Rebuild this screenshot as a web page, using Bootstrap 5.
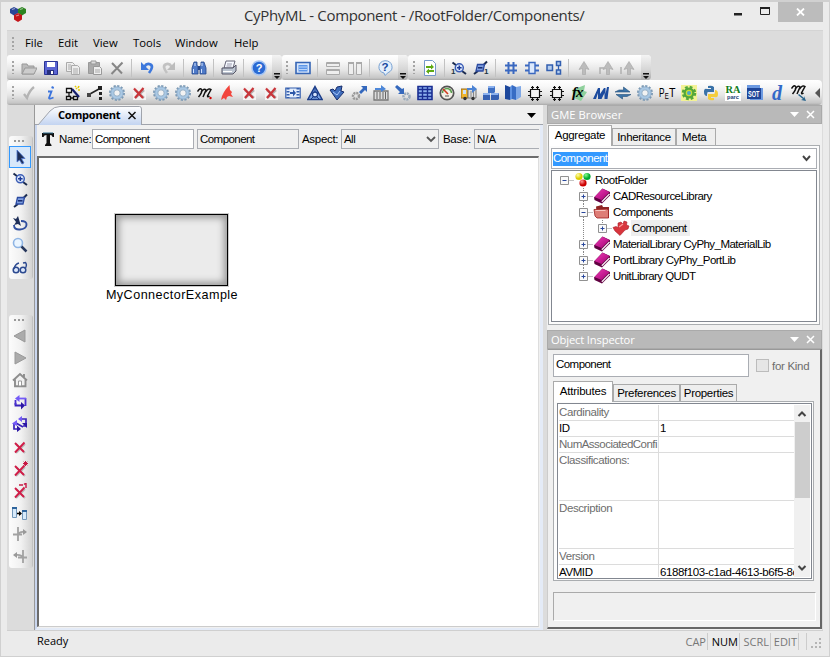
<!DOCTYPE html>
<html lang="en">
<head>
<meta charset="utf-8">
<title>CyPhyML - Component</title>
<link href="https://cdn.jsdelivr.net/npm/bootstrap@5.3.0/dist/css/bootstrap.min.css" rel="stylesheet">
<style>
*{box-sizing:border-box}
body{width:830px;height:657px;overflow:hidden;background:#ebebeb;color:#000;font:11.5px/16px "Liberation Sans",Arial,sans-serif;letter-spacing:-.55px;border:1px solid #d0d0d0;border-top-width:2px}
svg{display:block;flex:none;overflow:hidden;letter-spacing:0}
.ui{font-family:"Open Sans","Noto Sans",sans-serif;letter-spacing:0}
.titlebar{height:28px;padding-left:8px}
.titletext{font-size:15px;color:#333;width:341px;margin-left:217px;letter-spacing:-.33px;white-space:nowrap}
.closebtn{width:45px;height:20px;background:#bcbcbc;margin-right:6px}
.client{margin-left:6px;width:816px;height:621px;background:#dcdcdc;border-top:1px solid #d4d4d4}
.menubar{height:24px;font-size:11.3px;padding-left:5px}
.menubar span{white-space:nowrap}
.grip{width:2px;height:13px;flex:none;background:repeating-linear-gradient(#a4a4a4 0 2px,transparent 2px 4px)}
.band{height:25px;border-radius:3px 4px 4px 3px;background:linear-gradient(#fff 0,#f8f8f8 25%,#e6e6e6 60%,#c6c6c6 92%,#a8a8a8);padding-left:5px}
.band .grip{margin-right:4px}
.band svg{width:16px;height:16px;margin:0 3px}
.sep{width:1px;height:18px;background:#c2c2c2;margin:0 4px 0 3px;flex:none}
.ovf{width:10px;align-self:stretch;background:linear-gradient(#f4f4f4,#d5d5d5 60%,#aaa);border-radius:0 4px 4px 0;margin-left:auto;display:flex;align-items:flex-end}
.ovf svg{width:9px;height:9px;margin:0 1px 0 0}
.main{height:525px}
.dock{width:27px;padding:31px 0 0 2px}
.palette{width:24px;background:linear-gradient(90deg,#fcfcfc,#f1f1f1 50%,#d4d4d4 94%,#b8b8b8);border-radius:3px}
.dotrow{height:10px;padding-top:4px}
.dots{width:10px;height:2px;margin-left:5px;background:repeating-linear-gradient(90deg,#999 0 2px,transparent 2px 4px)}
.tool{height:22px;width:22px;display:flex;align-items:center;justify-content:center}
.tool.on{border:1px solid #3399ff;background:#d8e8fa}
.tool svg{width:16px;height:16px}
.doc{width:509px;border-left:1px solid #999;background:#f0f0f0}
.doctabs{height:20px;border-bottom:1px solid #a0a4ac;padding-top:1px}
.doctab{height:19px;width:104px;margin-left:3px}
.doctab svg{grid-area:1/1}
.doctab div{grid-area:1/1;padding-left:20px;font-weight:700;font-size:11.1px;line-height:18px;letter-spacing:-.25px}
.docbody{height:505px;border-left:2px solid #c9d6ef;border-right:3px solid #e4ebf7;padding-right:1px;border-bottom:2px solid #e4ebf7}
.objbar{height:31px;padding:4px 0 0 4px}
.field{border:1px solid #aaadb3;height:20px;background:#fff;padding:0 2px;line-height:18px;white-space:nowrap;overflow:hidden}
.flat{background:#f0f0f0}
.canvas{height:471px;background:#fff;border:solid #6c6c6c;border-width:2px 1px 1px 2px;border-right-color:#ddd;border-bottom-color:#ccc;padding:56px 0 0 65px}
.model{width:136px;font-size:12.6px;letter-spacing:.46px;text-align:center;white-space:nowrap}
.modelbox{width:113px;height:72px;margin:0 auto 1px 11px;border:1px solid #000;background:#ebebeb;box-shadow:inset 0 0 7px 3px #999,0 0 0 1px #ccc}
.right{width:275px;margin-left:4px;background:#f0f0f0}
.caption{height:19px;background:#b9b9b9;border:1px solid #aaa;color:#fff;font-size:11.2px;padding:0 4px 0 3px;letter-spacing:-.15px}
.tabx{border:1px solid #aaa;border-bottom:0;height:17px;background:#eee;text-align:center;line-height:17px;white-space:nowrap;letter-spacing:-.3px}
.tabx.cur{background:#fff;height:21px;line-height:18px;margin-bottom:-1px;z-index:1}
.page{border:1px solid #aaadb0;background:#fcfcfc;padding:2px}
.tree{border:1px solid #828790;background:#fff;height:152px;padding:1px 0 0 7px;margin-top:1px}
.trow{height:16px}
.trow svg{height:16px}
.trow span{white-space:nowrap}
.lv1{padding-left:19px}
.lv2{padding-left:38px}
.grid{border:1px solid #828790;background:#fff;height:176px;padding:1px}
.arow{border-bottom:1px solid #dcdcdc;height:16px;line-height:15px;overflow:hidden;color:#6d6d6d;letter-spacing:-.4px}
.arow>div{white-space:nowrap;overflow:hidden}
.arow>div:first-child{width:100px;border-right:1px solid #dcdcdc;flex:none}
.arow>div:last-child{padding-left:1px}
.tall{height:48px}
.set{color:#000}
.insp{height:280px;border:solid;border-width:1px 2px 2px 1px;border-color:#999 #666 #666 #ccc;padding:4px 6px 0 5px}
.status{height:21px;font-size:11px;border-top:1px solid #cfcfcf;background:#ebebeb;padding-left:30px;line-height:20px}
.status b{font-weight:400;color:#777;border-right:1px solid #ccc;height:17px;line-height:17px;text-align:right;padding-right:1px}
</style>
<script src="https://cdn.jsdelivr.net/npm/bootstrap@5.3.0/dist/js/bootstrap.bundle.min.js"></script>
</head>
<body>
<svg width="0" height="0" class="position-absolute">
<defs>
<linearGradient id="tabg" x2="0" y2="1"><stop stop-color="#fff"/><stop offset="1" stop-color="#c3d4f1"/></linearGradient>
<linearGradient id="blu" x2="1" y2="1"><stop stop-color="#8db4f4"/><stop offset="1" stop-color="#2650a8"/></linearGradient>
<radialGradient id="ry" cx=".35" cy=".3"><stop stop-color="#ffa"/><stop offset="1" stop-color="#dc0"/></radialGradient>
<radialGradient id="rg" cx=".35" cy=".3"><stop stop-color="#8f8"/><stop offset="1" stop-color="#0a3"/></radialGradient>
<radialGradient id="rr" cx=".35" cy=".3"><stop stop-color="#f99"/><stop offset="1" stop-color="#c00"/></radialGradient>
<linearGradient id="mag" x2="1" y2="1"><stop stop-color="#f03cb8"/><stop offset="1" stop-color="#a00070"/></linearGradient>
</defs>
<symbol id="gear" viewBox="0 0 16 16"><circle cx="8" cy="8" r="7" fill="none" stroke="#7d9ab4" stroke-width="2" stroke-dasharray="2.200 1.465"/><circle cx="8" cy="8" r="4.700" fill="none" stroke="#a9c8e4" stroke-width="3"/><circle cx="8" cy="8" r="6.200" fill="none" stroke="#86a7c6" stroke-width=".8"/><circle cx="8" cy="8" r="3.200" fill="#f2f2f2" stroke="#7f9fbc" stroke-width=".8"/></symbol>
<symbol id="redx" viewBox="0 0 16 16"><path d="M2 2h13v13H2z" fill="#f5f2f2"/><path d="M4 5l9 8M13 5l-9 8" stroke="#b5b0b0" stroke-width="2.400"/><path d="M3 3.500l9 9.500M12.500 3L4 13" stroke="#c9353a" stroke-width="2.200"/></symbol>
<symbol id="chip" viewBox="0 0 16 16"><path d="M3.500 4.500h9v8h-9zM5.500 1v3.500M10.500 1v3.500M5.500 12.500V16M10.500 12.500V16M1 6.500h2.500M1 10.500h2.500M12.500 6.500H15M12.500 10.500H15M4 2.500h3M9 2.500h3M4 14.500h3M9 14.500h3" fill="#f4f4f4" stroke="#111" stroke-width="1.200"/></symbol>
<symbol id="ovf" viewBox="0 0 9 9"><path d="M2 2h6v1.500H2zM2 5h6L5 8z" fill="#111"/></symbol>
<symbol id="book" viewBox="0 0 18 16"><path d="M1 9.500L9.500.5 17 4v3.500L9 15.500 1.500 12z" fill="#600040"/><path d="M1.500 9L9.500.8 16.500 4 8.500 12z" fill="url(#mag)"/><path d="M8.800 13.800L16.500 6" stroke="#f6e6f0" stroke-width="1.400"/></symbol>
<symbol id="boxp" viewBox="0 0 18 16"><path d="M9.500 8.500H18" stroke="#888" stroke-dasharray="1 1"/><path d="M1.500 4.500h8v8h-8z" fill="#fafafa" stroke="#919191"/><path d="M3.500 8.500h4" stroke="#2a489c"/></symbol>
<symbol id="up" viewBox="0 0 18 16"><path d="M5.500 0v4" stroke="#888" stroke-dasharray="1 1"/><use href="#boxp"/></symbol>
<symbol id="minus" viewBox="0 0 18 16"><use href="#up"/><path d="M5.500 13v3" stroke="#888" stroke-dasharray="1 1"/></symbol>
<symbol id="plusend" viewBox="0 0 18 16"><use href="#up"/><path d="M5.500 6.500v4" stroke="#2a489c"/></symbol>
<symbol id="plus" viewBox="0 0 18 16"><use href="#minus"/><path d="M5.500 6.500v4" stroke="#2a489c"/></symbol>
<symbol id="plusthru" viewBox="0 0 37 16"><path d="M5.500 0v16" stroke="#888" stroke-dasharray="1 1"/><use href="#plusend" x="19" width="18" height="16"/></symbol>
<symbol id="zin" viewBox="0 0 16 16"><path d="M1.500 2.500l4 3M11 11l4 3" stroke="#1c2c50" stroke-width="2"/><circle cx="8.300" cy="7.800" r="4" fill="#dce8fc" stroke="#3a5cb4" stroke-width="1.500"/><path d="M6 7.800h4.600M8.300 5.500v4.600" stroke="#1d3a98" stroke-width="1.500"/></symbol>
<symbol id="zout" viewBox="0 0 16 16"><path d="M11 5.500l4-4M6 11l-4 3" stroke="#1c2c50" stroke-width="2"/><path d="M5.500 4.500h7L11 11H4z" fill="#7f9fe0" stroke="#2b4aa0" stroke-width="1.300"/><path d="M6 7.800h4.500" stroke="#14286c" stroke-width="1.500"/></symbol>
<symbol id="upa" viewBox="0 0 16 16"><path d="M8 1.500l5 8-3.500-1v6h-3v-6L3 9.500z" fill="#bcbcbc" stroke="#a4a4a4" stroke-width=".6"/></symbol>
<symbol id="x1" viewBox="0 0 16 16"><path d="M4 5l9 9M13 5l-9 9" stroke="#bbb" stroke-width="2"/><path d="M3 4l9 9M12.500 3.500L3 13.500" stroke="#d11d48" stroke-width="1.900"/></symbol>
<symbol id="m3" viewBox="0 0 16 16"><path d="M.5 6.500Q3 2.500 4.500 4.500T1.500 12M4 7.500q3-5 5-2.500L6 12M8.500 7q3-4.500 5.500-2.500L10.500 11q0 1.500 2 0" fill="none" stroke="#111" stroke-width="1.500"/></symbol>
</svg>

<div class="titlebar d-flex ui">
 <svg width="18" height="18" viewBox="0 0 18 18" style="margin-top:4px"><path d="M5 1l4 2v4L5 9.500 1 7V3z" fill="#2a4596"/><path d="M13 1l4 2v4l-4 2.500L9 7V3z" fill="#2c8420"/><path d="M9 7l4 2v4.500L9 16l-4-2.500V9z" fill="#c41419"/><path d="M3 3.500l3-1M11 3.500l3-1M7 10l3-1" stroke="#fff" stroke-opacity=".5" stroke-width="1.300"/></svg>
 <div class="titletext lh-base" style="padding-top:2px">CyPhyML - Component - /RootFolder/Components/</div>
 <svg class="ms-auto" width="68" height="20" viewBox="0 0 68 20"><path d="M24 11h8v2.500h-8z" fill="#222"/><path d="M50.500 5.500h9v7h-9z" fill="none" stroke="#222"/><path d="M50 5h10v2H50z" fill="#222"/></svg>
 <div class="closebtn d-flex align-items-center justify-content-center"><svg width="9" height="8" viewBox="0 0 9 8"><path d="M1 .5l7 7M8 .5l-7 7" stroke="#fff" stroke-width="1.800"/></svg></div>
</div>

<div class="client">
 <div class="menubar ui d-flex align-items-center">
  <i class="grip"></i>
  <span style="margin-left:11px;width:33px">File</span><span style="width:35px">Edit</span><span style="width:40px">View</span><span style="width:42px">Tools</span><span style="width:59px">Window</span><span>Help</span>
 </div>

 <div class="d-flex">
  <div class="band d-flex align-items-center" style="width:275px">
   <i class="grip"></i>
   <svg viewBox="0 0 16 16"><path d="M1 4h5l1 2h6v8H1z" fill="#bbb" stroke="#999"/><path d="M4 8h12l-3 6H1z" fill="#ccc" stroke="#999"/></svg>
   <svg viewBox="0 0 16 16"><path d="M1.500 1.500h13v13h-13z" fill="#5a64d2" stroke="#2a3496"/><path d="M4 2h8v5H4z" fill="#fff"/><path d="M4 10h7v5H4z" fill="#27307c"/><path d="M8 11h2v3H8z" fill="#fff"/></svg>
   <svg viewBox="0 0 16 16"><path d="M1.500 2.500h6l2 2v7h-8z" fill="#eee" stroke="#aaa"/><path d="M6.500 5.500h6l2 2v7h-8z" fill="#eee" stroke="#aaa"/><path d="M8 9h5M8 11h5M8 13h5M3 5h3M3 7h3M3 9h3" stroke="#aaa"/></svg>
   <svg viewBox="0 0 16 16"><path d="M1.500 2.500h11v11h-11z" fill="#aaa" stroke="#999"/><path d="M4 1h5v3H4z" fill="#ddd" stroke="#999"/><path d="M6.500 6.500h6l2 2v6h-8z" fill="#eee" stroke="#999"/><path d="M8 10h5M8 12h5" stroke="#aaa"/></svg>
   <svg viewBox="0 0 16 16"><path d="M3 3l10 10.500M13.500 2.500L2.500 14" stroke="#868686" stroke-width="2"/></svg>
   <i class="sep"></i>
   <svg viewBox="0 0 16 16"><path d="M5.500 6.500Q8 2.500 11.500 4.500T10 13" fill="none" stroke="#3d78dc" stroke-width="2.700"/><path d="M2 2v8h8z" fill="#3d78dc"/></svg>
   <svg viewBox="0 0 16 16"><path d="M10.500 6.500Q8 2.500 4.500 4.500T6 13" fill="none" stroke="#c2c2c2" stroke-width="2.700"/><path d="M14 2v8H6z" fill="#bcbcbc"/></svg>
   <i class="sep"></i>
   <svg viewBox="0 0 16 16"><path d="M3 2h3v3l1 2v7H1V8zM13 2h-3v3L9 7v7h6V8z" fill="#4e7ac8" stroke="#24468c" stroke-width=".8"/><path d="M7 6h2v4H7z" fill="#24468c"/><path d="M2.500 9v4M10.500 9v4M4 3v3M11 3v3" stroke="#cfe0ff"/></svg>
   <i class="sep"></i>
   <svg viewBox="0 0 16 16"><path d="M5 1h9l-2 7H3z" fill="#f6f9ff" stroke="#667"/><path d="M1 8h11l3-3v6l-3 3H1z" fill="#bbc4d0" stroke="#556"/><path d="M2 11.500h9" stroke="#fff"/><path d="M6 4h5M5.500 6h5" stroke="#99a"/></svg>
   <i class="sep"></i>
   <svg viewBox="0 0 16 16"><circle cx="8" cy="8" r="7" fill="#2a6ad4" stroke="#a6c5f3" stroke-width="1.500"/><text x="8" y="12" font-size="11" font-weight="700" fill="#fff" text-anchor="middle" font-family="Liberation Sans">?</text></svg>
   <div class="ovf"><svg><use href="#ovf"/></svg></div>
  </div>
  <div class="band d-flex align-items-center" style="width:126px">
   <i class="grip" style="margin-left:-1px"></i>
   <svg viewBox="0 0 16 16"><path d="M1 2.500h14v11H1z" fill="#d7e6fb" stroke="#3565b5" stroke-width="1.600"/><path d="M3.500 5h9v6.500h-9z" fill="#5c96e8"/><path d="M4 7h8M4 9.500h8" stroke="#bcd6fb"/></svg>
   <i class="sep"></i>
   <svg viewBox="0 0 16 16"><path d="M1.500 2.500h13v4h-13zM1.500 9.500h13v5h-13z" fill="#eee" stroke="#aaa"/><path d="M2 3h12M2 10h12" stroke="#aaa" stroke-width="2"/></svg>
   <svg viewBox="0 0 16 16"><path d="M1.500 2.500h5v12h-5zM9.500 2.500h5v12h-5z" fill="#eee" stroke="#aaa"/><path d="M1 3h6M9 3h6" stroke="#aaa" stroke-width="2"/></svg>
   <i class="sep"></i>
   <svg viewBox="0 0 16 16"><path d="M8 .7a7 6.300 0 0 1 3 12L8 15.500l-1-2.500A7 6.300 0 0 1 8 .7z" fill="#e3effc" stroke="#78a1d2"/><text x="8" y="11" font-size="11.500" font-weight="700" fill="#15479f" text-anchor="middle" font-family="Liberation Sans">?</text></svg>
   <div class="ovf"><svg><use href="#ovf"/></svg></div>
  </div>
  <div class="band d-flex align-items-center" style="width:243px">
   <i class="grip"></i>
   <svg viewBox="0 0 16 16"><path d="M2.500.5h8l3 3v12h-11z" fill="#fff" stroke="#7497ca"/><path d="M4 6h5V4l3 3-3 2.500V8H4zM12 10H7V8.500l-3 3L7 14v-2h5z" fill="#5eaa12"/></svg>
   <i class="sep" style="margin-right:3px"></i>
   <svg viewBox="0 0 16 16"><use href="#zin"/><text x="0" y="14" font-size="8" font-weight="700" font-family="Liberation Sans" fill="#234">1</text></svg>
   <svg viewBox="0 0 16 16"><use href="#zout" x="-1" width="16" height="16"/><text x="11" y="14" font-size="8" font-weight="700" font-family="Liberation Sans" fill="#234">1</text></svg>
   <i class="sep"></i>
   <svg viewBox="0 0 16 16"><path d="M5.500 2v12M10.500 2v12M2 5.500h12M2 10.500h12" stroke="#3a68c0" stroke-width="2"/></svg>
   <svg viewBox="0 0 16 16" style="margin-left:2px"><path d="M1 5.500h4M1 10.500h4M11 5.500h4M11 10.500h4" stroke="#3a68c0" stroke-width="2"/><path d="M5 2.500h6v11H5z" fill="#dce9fc" stroke="#3a68c0" stroke-width="1.400"/></svg>
   <svg viewBox="0 0 16 16"><path d="M1 5h5.500v5.500H1zM10.500 1.500h4v4h-4zM10.500 10h4v4h-4z" fill="#b5ceef" stroke="#335fb0" stroke-width="1.500"/><path d="M12.500 5.500V10" stroke="#335fb0" stroke-width="1.300"/></svg>
   <i class="sep"></i>
   <svg><use href="#upa"/></svg>
   <svg viewBox="0 0 16 16"><use href="#upa" x="2" width="16" height="16"/><path d="M2 14V8h4" fill="none" stroke="#b0b0b0" stroke-width="1.500"/></svg>
   <svg viewBox="0 0 16 16" style="margin-left:2px"><use href="#upa" x="2" width="16" height="16"/><path d="M2 7v7" stroke="#b0b0b0" stroke-width="1.500"/></svg>
   <div class="ovf"><svg><use href="#ovf"/></svg></div>
  </div>
 </div>

 <div class="band d-flex align-items-center overflow-hidden" style="width:815px">
  <i class="grip"></i>
  <svg viewBox="0 0 16 16"><path d="M3 9l3 4q2-7 7-11" fill="none" stroke="#b4b4b4" stroke-width="2.300"/></svg>
  <svg viewBox="0 0 16 16"><path d="M10 1.500l-.7 2" stroke="#3c74dc" stroke-width="2.300"/><path d="M5 6.500h3.500L6 13q0 1.500 4.500-.5" fill="none" stroke="#3c74dc" stroke-width="1.800"/></svg>
  <svg viewBox="0 0 16 16"><path d="M1.500 3.500h5v4h-5zM1.500 11.500h4v3h-4zM8.500 11.500h4v3h-4zM4 8v3M6 13h3" fill="#fff" stroke="#111" stroke-width="1.300"/><path d="M7 4l7 8" stroke="#17206e" stroke-width="2.200"/><path d="M10 1l1 1M14 1l-1 2M15 5h-2M11 4l1-1" stroke="#e6c800" stroke-width="1.600"/></svg>
  <svg viewBox="0 0 16 16"><path d="M2 9.500L12 4" stroke="#222" stroke-width="1.500"/><path d="M0 8h4v4H0z" fill="#444"/><path d="M11 1h4v4h-4zM12 7h3v3h-3zM12 12h3v3h-3z" fill="#222"/></svg>
  <svg><use href="#gear"/></svg><svg><use href="#redx"/></svg><svg><use href="#gear"/></svg><svg><use href="#gear"/></svg>
  <svg viewBox="0 0 16 16"><use href="#m3"/><circle cx="13.500" cy="13" r="1.200" fill="#c00"/></svg>
  <svg viewBox="0 0 16 16"><path d="M10.500 0L11 5l2 2-1 2 2 3-4-1-2 1-1 3-2-2-3 2 1-4 1-2 1-2 2-3z" fill="#f2453c"/></svg>
  <svg><use href="#redx"/></svg><svg><use href="#redx"/></svg>
  <svg viewBox="0 0 16 16"><path d="M.8 3h14.400v10H.8z" fill="#e4eefc" stroke="#355fae" stroke-width="1.200"/><path d="M3 3v10M13 3v10" stroke="#355fae" stroke-dasharray="1.500 1.500" stroke-width="3"/><path d="M5 7h3V4.500L11 8l-3 3.500V9H5z" fill="#2c57a8"/></svg>
  <svg viewBox="0 0 16 16"><path d="M8 1.500L15.200 14.500H.8z" fill="#7ba4e6" stroke="#1b3c88" stroke-width="1.500"/><circle cx="8" cy="9.500" r="2.500" fill="#d7e5fc" stroke="#1b3c88" stroke-width="1.300"/><path d="M4 14l3-3M12 14l-3-3M8 3v4" stroke="#1b3c88"/></svg>
  <svg viewBox="0 0 16 16"><path d="M1 5l3-1 2 2 2-4 5-1-1 5 3 1-7 8z" fill="#3f6dbc" stroke="#182e6c"/><path d="M4 7l4 3 3-4" stroke="#a7c6fa" fill="none"/></svg>
  <svg viewBox="0 0 16 16"><circle cx="5" cy="11" r="3" fill="none" stroke="#999" stroke-width="2.500" stroke-dasharray="2 .8"/><path d="M8 7l4-4-2-2h6v6l-2-2-4 4z" fill="#3468bd"/></svg>
  <svg viewBox="0 0 16 16"><path d="M1 6h14v9H1z" fill="#ddd" stroke="#777" stroke-width="1.300"/><path d="M4 7v7M7 7v7M10 7v7M12.500 7v7" stroke="#666"/><path d="M2 3h6V0l5 4-5 3V5H2z" fill="#4d87d8"/></svg>
  <svg viewBox="0 0 16 16"><circle cx="11.500" cy="11.500" r="3" fill="none" stroke="#9ab" stroke-width="2.500" stroke-dasharray="2 .8"/><path d="M0 2l2-2 5 4 2-1v6H3l2-2z" fill="#3468bd"/></svg>
  <svg viewBox="0 0 16 16"><path d="M1 1.500h14v13H1z" fill="#8fb2ee" stroke="#1a2e92" stroke-width="1.600"/><path d="M1 4.500h14M1 8h14M1 11.500h14M5.500 2v12M10.500 2v12" stroke="#1a2e92" stroke-width="1.400"/></svg>
  <svg viewBox="0 0 16 16"><circle cx="8" cy="8" r="6.700" fill="#f4f1e7" stroke="#555" stroke-width="1.700"/><path d="M3.500 8a4.500 4.500 0 0 1 9 0" fill="none" stroke="#5a9f4f" stroke-width="1.600"/><path d="M4 4l5 5" stroke="#d23b1f" stroke-width="1.600"/><path d="M6 11h4" stroke="#555"/></svg>
  <svg viewBox="0 0 16 16"><path d="M0 4h7v9H0z" fill="#f0b52c" stroke="#9b6a12"/><path d="M7 4h8v9H7z" fill="#ddd" stroke="#777"/><path d="M2 5h3v4H2z" fill="#cfe2f7"/><path d="M10 6v6M12.500 6v6" stroke="#888"/><path d="M6 3h5V0l5 4-5 4V5H6z" fill="#4b83d4"/><circle cx="4" cy="13.500" r="1.700" fill="#333"/><circle cx="12" cy="13.500" r="1.700" fill="#333"/></svg>
  <svg viewBox="0 0 16 16"><path d="M5 2l1-1h6v6l-1 1H5z" fill="#3e6fc2"/><path d="M0 9l1-1h6v7H0zM8 9l1-1h7v6l-1 1H8z" fill="#3560b2"/><path d="M5 2l1-1h6l-1 2H5zM0 9l1-1h6v2H0zM8 9l1-1h7l-1 2H8z" fill="#8bb1ee"/></svg>
  <svg viewBox="0 0 16 16"><path d="M0 0l5 2v13l-5-1z" fill="#1d489c"/><path d="M5 2l2-2v14l-2 1z" fill="#5d90e0"/><path d="M7 0l4 2v13l-4-1z" fill="#376cc4"/><path d="M11 2l5-1v11l-5 3z" fill="#7fa8e6"/></svg>
  <svg><use href="#chip"/></svg><svg><use href="#chip"/></svg>
  <svg viewBox="0 0 16 16"><path d="M1 5L14 0l-1 6 3 1-6 9-7-3z" fill="#8fd09c"/><text x="1" y="12" font-family="Liberation Serif" font-style="italic" font-weight="700" font-size="15" letter-spacing="-1">fx</text></svg>
  <svg viewBox="0 0 16 16"><path d="M0 14L5 3h2v6l4-6h1.500v6L14 2h2l-1.500 12h-3V8l-3 6H5V8l-2 6z" fill="#1c4b9e"/></svg>
  <svg viewBox="0 0 16 16"><path d="M0 7h15L8.500 2v3H4zM16 9.500H1L7.500 14v-2.500H12z" fill="#3c74a8" stroke="#234f7b" stroke-width=".6"/></svg>
  <svg><use href="#gear"/></svg>
  <svg style="width:18px;margin:0 2px" viewBox="0 0 18 16"><text x="1" y="12" font-size="12" textLength="5.500" lengthAdjust="spacingAndGlyphs" font-family="Liberation Sans">P</text><text x="6.800" y="14" font-size="9" textLength="4" lengthAdjust="spacingAndGlyphs" font-family="Liberation Sans">E</text><text x="11" y="12" font-size="12" textLength="6.500" lengthAdjust="spacingAndGlyphs" font-family="Liberation Sans">T</text></svg>
  <svg viewBox="0 0 16 16"><path d="M0 0h16v16H0z" fill="#f3f295"/><circle cx="8" cy="8" r="5.500" fill="#55a83c" stroke="#55a83c" stroke-width="3.500" stroke-dasharray="2.500 1.820"/><circle cx="8" cy="8" r="2.600" fill="#4ea6c8" stroke="#c8dc34" stroke-width="1.200"/></svg>
  <svg viewBox="0 0 16 16"><path d="M5 1q4-1 6 1v5H5q-1 0-1 4-3 0-3-4t3-3h4V3H5z" fill="#3a72a8"/><path d="M11 15q-4 1-6-1V9h6q1 0 1-4 3 0 3 4t-3 3H8v1h3z" fill="#f4cd3c"/></svg>
  <svg viewBox="0 0 16 16"><path d="M0 0h16v16H0z" fill="#fff"/><text x=".5" y="8" font-size="10.500" textLength="15" lengthAdjust="spacingAndGlyphs" font-weight="700" fill="#117c20" font-family="Liberation Serif">RA</text><text x="2" y="14" font-size="6" textLength="12" lengthAdjust="spacingAndGlyphs" font-weight="700" fill="#223e78" font-family="Liberation Sans">parc</text></svg>
  <svg viewBox="0 0 16 16"><path d="M0 0h13v3h3v12H3v-3H0z" fill="#6c9ae2"/><path d="M0 3h14v11H0z" fill="#1e4699"/><text x="1" y="12" font-size="8.500" textLength="11.500" lengthAdjust="spacingAndGlyphs" font-weight="700" fill="#fff" font-family="Liberation Sans">SOT</text></svg>
  <svg viewBox="0 0 16 16"><text x="3" y="15" font-size="20" font-style="italic" font-weight="700" fill="#3268c8" font-family="Liberation Serif">d</text></svg>
  <svg viewBox="0 0 16 16"><use href="#m3" y="-3" width="16" height="16"/><path d="M8 9l5 4v-2l2 5-5-1 2-1-5-4z" fill="#27648d"/></svg>
  <svg viewBox="0 0 16 16" style="margin-right:-9px"><path d="M2 8l5-5v10z" fill="#555"/></svg>
 </div>

 <div class="main d-flex">
  <div class="dock flex-shrink-0">
   <div class="palette" style="height:143px">
    <div class="dotrow"><div class="dots"></div></div>
    <div class="tool on"><svg viewBox="0 0 16 16"><path d="M5 1l8 8.500H9.500L12 14l-2 1-2.500-4L5 13z" fill="#1f2f58" stroke="#4d76d0" stroke-width=".8"/></svg></div>
    <div class="tool"><svg><use href="#zin"/></svg></div>
    <div class="tool"><svg><use href="#zout"/></svg></div>
    <div class="tool"><svg viewBox="0 0 16 16"><path d="M9 6q6 0 5.500 4T8 14.500 2 10" fill="none" stroke="#304f9f" stroke-width="1.900"/><path d="M6 1l3 10-3-2-4 1 2-3-3-4 3 1z" fill="#1f2f58"/></svg></div>
    <div class="tool"><svg viewBox="0 0 16 16"><circle cx="6" cy="6" r="4.500" fill="#eaf5ff" stroke="#8fb5e4" stroke-width="1.600"/><path d="M9.500 9.500l5 5" stroke="#27375c" stroke-width="2.500"/></svg></div>
    <div class="tool"><svg viewBox="0 0 16 16"><circle cx="4" cy="11" r="2.800" fill="#dce8fa" stroke="#2c4a90" stroke-width="1.500"/><circle cx="11" cy="11" r="2.800" fill="#dce8fa" stroke="#2c4a90" stroke-width="1.500"/><path d="M2 10q1-5 5-6M13 10q2.500-4 .5-6.500L11 4" fill="none" stroke="#2c4a90" stroke-width="1.400"/></svg></div>
   </div>
   <div class="palette" style="height:253px;margin-top:36px">
    <div class="dotrow"><div class="dots"></div></div>
    <div class="tool"><svg viewBox="0 0 16 16"><path d="M13 2v12L2 8z" fill="#ababab" stroke="#999"/></svg></div>
    <div class="tool"><svg viewBox="0 0 16 16"><path d="M3 2v12l11-6z" fill="#ababab" stroke="#999"/></svg></div>
    <div class="tool"><svg viewBox="0 0 16 16"><path d="M3 7.500L8 3l5 4.500V14H3z" fill="#f0f0f0"/><path d="M1 8.500L8 2l7 6.500M3 7.500v6.700h10.500V7.500M12 5V2" fill="none" stroke="#8d8d8d" stroke-width="1.900"/><path d="M6.500 9h3v5h-3z" fill="#fff" stroke="#999"/></svg></div>
    <div class="tool"><svg viewBox="0 0 16 16"><path d="M3.500 9v2.500H9" fill="none" stroke="#3822ba" stroke-width="1.800"/><path d="M13.500 4v8M3.500 11V6" stroke="#4a30d0" stroke-width="1.800"/><path d="M7 4.500h7" stroke="#745bf7" stroke-width="1.800"/><path d="M7.500 1v7L3 4.500z" fill="#745bf7"/><path d="M9 8v7.500l4-4z" fill="#2b16a5"/></svg></div>
    <div class="tool"><svg viewBox="0 0 16 16"><path d="M9 3h5v7h-3M2 8v5h4M4 7l7 4" fill="none" stroke="#3822ba" stroke-width="1.700"/><path d="M10 0v6L6 3zM5 4v6L0 7.500z" fill="#745bf7"/><path d="M5 9.500V16l4-3zM10 7h5v5z" fill="#2b16a5"/></svg></div>
    <div class="tool" style="height:23px"><svg><use href="#x1"/></svg></div>
    <div class="tool"><svg viewBox="0 0 16 16"><use href="#x1" y="1" width="16" height="16"/><path d="M13.500 0v5M11 2.500h5M11.700.7l3.600 3.600M15.300.7l-3.600 3.600" stroke="#c71843"/></svg></div>
    <div class="tool"><svg viewBox="0 0 16 16"><use href="#x1" y="1" width="16" height="16"/><path d="M7 2h4M14 0v5M12 1.500L14 0" stroke="#c71843" stroke-width="1.400"/></svg></div>
    <div class="tool" style="height:21px"><svg viewBox="0 0 16 16"><path d="M.5 2.500h4v10h-4zM10.500 5.500h4v9h-4z" fill="#d8eafa" stroke="#7398ba"/><path d="M0 2h5v2H0zM10 5h5v2h-5z" fill="#2f659d"/><path d="M5 8.500h4" stroke="#000" stroke-width="1.500"/><path d="M7 6v5l3-2.500z"/></svg></div>
    <div class="tool"><svg viewBox="0 0 16 16"><path d="M1 8.500h9M6 1v14M6 9q1-3.500 6-3" fill="none" stroke="#a2a2a2" stroke-width="1.800"/><path d="M11 3l4 3-4 3z" fill="#999"/></svg></div>
    <div class="tool"><svg viewBox="0 0 16 16"><path d="M6 9.500h9M11 2v13M11 10q-1-3.500-7-3" fill="none" stroke="#a2a2a2" stroke-width="1.800"/><path d="M5 4L1 7l4 3z" fill="#999"/></svg></div>
   </div>
  </div>

  <div class="doc flex-shrink-0">
   <div class="doctabs d-flex align-items-center">
    <div class="doctab d-grid ui"><svg width="104" height="19"><path d="M0 19L12 5Q16 .5 22 .5H101.500Q103.500.5 103.500 3V19" fill="url(#tabg)" stroke="#a0a4ac"/><path d="M90.500 6l7 7M97.500 6l-7 7" stroke="#111" stroke-width="1.500"/></svg><div>Component</div></div>
    <svg class="ms-auto" width="9" height="5" style="margin-right:7px"><path d="M0 0h9L4.500 5z"/></svg>
   </div>
   <div class="docbody">
    <div class="objbar d-flex">
     <svg width="14" height="15" viewBox="0 0 14 15" style="margin-top:3px"><path d="M1 1h12v4h-1.500q0-2-2.500-2v8l1.500 2v1H4v-1l1.500-2V3Q3 3 2.500 5H1z" fill="#111"/><path d="M2 1h10" stroke="#2f6c8c"/></svg>
     <span style="margin:2px 0 0 4px;width:33px;letter-spacing:-.3px">Name:</span>
     <div class="field" style="width:102px">Component</div>
     <div class="field flat" style="width:102px;margin-left:3px">Component</div>
     <span style="margin:2px 0 0 3px;width:39px;letter-spacing:-.3px">Aspect:</span>
     <div class="field flat d-flex justify-content-between align-items-center" style="width:98px">All<svg width="10" height="7"><path d="M1 1l4 4 4-4" fill="none" stroke="#555" stroke-width="1.800"/></svg></div>
     <span style="margin:2px 0 0 4px;width:31px;letter-spacing:-.3px">Base:</span>
     <div class="field flat flex-grow-1 border-end-0" style="letter-spacing:0">N/A</div>
    </div>
    <div class="canvas"><div class="model"><div class="modelbox"></div>MyConnectorExample</div></div>
   </div>
  </div>

  <div class="right flex-shrink-0">
   <div class="caption ui d-flex align-items-center"><span style="letter-spacing:.05px">GME Browser</span><svg class="ms-auto" width="28" height="11"><path d="M1 3h9L5.500 8z" fill="#fff"/><path d="M18 2l7 7M25 2l-7 7" stroke="#fff" stroke-width="1.500"/></svg></div>
   <div class="d-flex align-items-end position-relative" style="height:21px;padding-left:1px"><div class="tabx cur" style="width:64px">Aggregate</div><div class="tabx" style="width:64px">Inheritance</div><div class="tabx text-start" style="width:40px;padding-left:5px">Meta</div></div>
   <div class="page" style="height:180px;width:272px;margin-left:1px">
    <div class="field d-flex align-items-center" style="height:21px;padding:0 5px 0 1px"><span style="background:#39f;color:#fff;line-height:13px;height:14px">Component</span><svg class="ms-auto" width="9" height="7"><path d="M1 1l3.500 4L8 1" fill="none" stroke="#444" stroke-width="1.900"/></svg></div>
    <div class="tree">
     <div class="trow d-flex"><svg width="15"><use href="#boxp" width="18" height="16"/></svg><svg width="18" viewBox="0 0 18 16"><circle cx="5" cy="4.500" r="3.600" fill="url(#ry)"/><circle cx="13" cy="4.500" r="3.600" fill="url(#rg)"/><circle cx="9" cy="11" r="3.600" fill="url(#rr)"/></svg><span style="margin-left:3px;letter-spacing:-.45px">RootFolder</span></div>
     <div class="trow d-flex lv1"><svg width="15"><use href="#plus" width="18" height="16"/></svg><svg width="18"><use href="#book"/></svg><span style="margin-left:2px">CADResourceLibrary</span></div>
     <div class="trow d-flex lv1"><svg width="15"><use href="#minus" width="18" height="16"/></svg><svg width="18" viewBox="0 0 18 16"><path d="M3 2.500L9 1l1 2h6v11H4z" fill="#8e2424"/><path d="M1 5.500l13-.5 1.500 1v8H4L2 12z" fill="#de7d76" stroke="#9c2020" stroke-width=".8"/><path d="M2.500 6.500h10" stroke="#f7c6c0"/></svg><span style="margin-left:2px">Components</span></div>
     <div class="trow d-flex"><svg width="34" style="margin-left:19px"><use href="#plusthru" width="37" height="16"/></svg><svg width="18" viewBox="0 0 18 16"><path d="M1 7.500l3-1 2 1V3l3-1 2 2 1-3 3 1-.5 3L17 6l-1 3-3 1-5 5.500L3 11z" fill="#d8353c" stroke="#a71f2b" stroke-width=".6"/><path d="M7 7l4-3" stroke="#f99" stroke-width="1.300"/></svg><span style="margin-left:1px;padding:0 3px 0 1px;background:#eee">Component</span></div>
     <div class="trow d-flex lv1"><svg width="15"><use href="#plus" width="18" height="16"/></svg><svg width="18"><use href="#book"/></svg><span style="margin-left:2px">MaterialLibrary CyPhy_MaterialLib</span></div>
     <div class="trow d-flex lv1"><svg width="15"><use href="#plus" width="18" height="16"/></svg><svg width="18"><use href="#book"/></svg><span style="margin-left:2px">PortLibrary CyPhy_PortLib</span></div>
     <div class="trow d-flex lv1"><svg width="15"><use href="#plusend" width="18" height="16"/></svg><svg width="18"><use href="#book"/></svg><span style="margin-left:2px">UnitLibrary QUDT</span></div>
    </div>
   </div>
   <div class="caption ui d-flex align-items-center" style="margin-top:5px"><span>Object Inspector</span><svg class="ms-auto" width="28" height="11"><path d="M1 3h9L5.500 8z" fill="#fff"/><path d="M18 2l7 7M25 2l-7 7" stroke="#fff" stroke-width="1.500"/></svg></div>
   <div class="insp">
    <div class="d-flex"><div class="field" style="width:196px;height:23px">Component</div><div style="width:13px;height:13px;border:1px solid #bcbcbc;background:#e6e6e6;margin:5px 3px 0 7px"></div><span style="color:#6d6d6d;padding-top:4px;letter-spacing:-.3px">for Kind</span></div>
    <div class="d-flex align-items-end position-relative" style="height:22px;margin-top:2px"><div class="tabx cur" style="width:60px;letter-spacing:-.2px">Attributes</div><div class="tabx" style="width:67px">Preferences</div><div class="tabx" style="width:57px">Properties</div></div>
    <div class="page" style="width:261px;height:180px;padding:1px 1px 1px 3px">
     <div class="grid d-flex">
      <div class="overflow-hidden flex-shrink-0" style="width:235px">
       <div class="arow d-flex"><div>Cardinality</div><div></div></div>
       <div class="arow d-flex set"><div>ID</div><div>1</div></div>
       <div class="arow d-flex"><div style="letter-spacing:-.52px">NumAssociatedConfi</div><div></div></div>
       <div class="arow tall d-flex"><div>Classifications:</div><div></div></div>
       <div class="arow tall d-flex"><div>Description</div><div></div></div>
       <div class="arow d-flex"><div>Version</div><div></div></div>
       <div class="arow d-flex set"><div>AVMID</div><div>6188f103-c1ad-4613-b6f5-8c</div></div>
      </div>
      <div style="width:16px;background:#f0f0f0" class="d-flex flex-column align-items-center"><svg width="10" height="17"><path d="M1.500 11L5 7.500 8.500 11" fill="none" stroke="#444" stroke-width="2"/></svg><div style="width:15px;height:76px;background:#cdcdcd"></div><svg class="mt-auto" width="10" height="17"><path d="M1.500 6L5 9.500 8.500 6" fill="none" stroke="#444" stroke-width="2"/></svg></div>
     </div>
    </div>
    <div style="height:29px;width:263px;margin-top:11px;border:1px solid #aaa;border-right-color:#fff;border-bottom-color:#fff"></div>
   </div>
  </div>
 </div>

 <div class="status ui d-flex align-items-center"><span>Ready</span>
  <b class="ms-auto" style="width:30px">CAP</b><b style="width:32px;color:#000">NUM</b><b style="width:31px">SCRL</b><b style="width:28px">EDIT</b><b style="width:8px"></b>
  <svg width="15" height="15" style="margin-right:1px"><path d="M12 4h2v2h-2zM8 8h2v2H8zM12 8h2v2h-2zM4 12h2v2H4zM8 12h2v2H8zM12 12h2v2h-2z" fill="#b5b5b5"/></svg>
 </div>
</div>
</body>
</html>
